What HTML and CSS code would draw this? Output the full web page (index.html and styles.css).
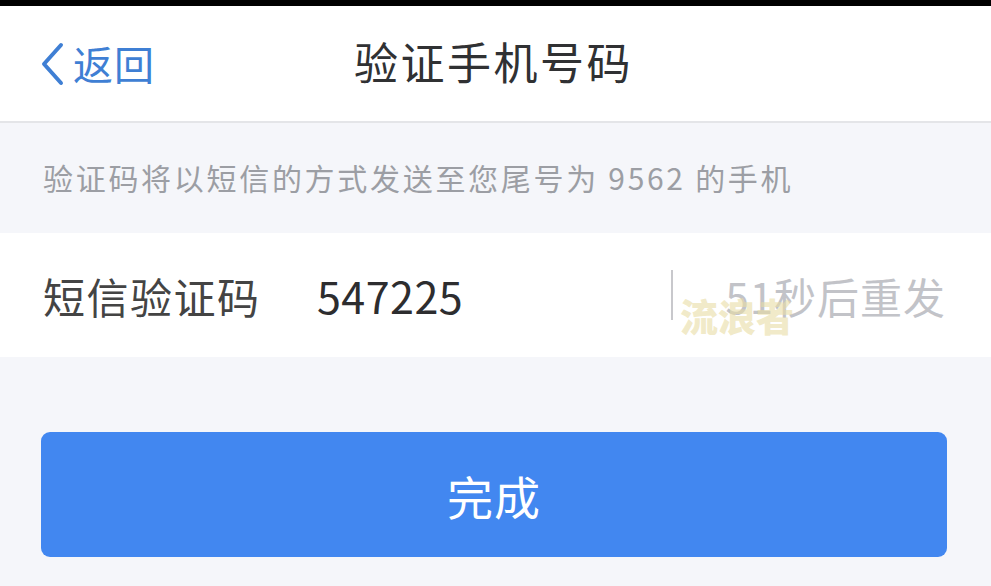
FILE: index.html
```html
<!DOCTYPE html>
<html lang="zh-CN">
<head>
<meta charset="utf-8">
<title>验证手机号码</title>
<link rel="stylesheet" href="styles.css">
</head>
<body>
<div class="status"></div>
<header class="nav">
  <a class="back">
    <svg class="chev" width="26" height="44" viewBox="0 0 26 44"><path d="M22 3 L5 22 L22 41" fill="none" stroke="#3f7fd4" stroke-width="4" stroke-linecap="round" stroke-linejoin="round"/></svg>
    <span>返回</span>
  </a>
  <h1 class="title">验证手机号码</h1>
  <div></div>
</header>
<div class="hint">验证码将以短信的方式发送至您尾号为 9562 的手机</div>
<div class="row">
  <span class="label">短信验证码</span>
  <span class="code">547225</span>
  <span class="divider"></span>
  <span class="resend">51秒后重发</span>
  <span class="watermark">流浪者</span>
</div>
<div class="actions">
  <button class="done">完成</button>
</div>
</body>
</html>
```
FILE: styles.css
```css
html, body {
  margin: 0;
  padding: 0;
  background: #f5f6fa;
  font-family: "Noto Sans CJK SC", "Noto Sans", sans-serif;
}
.status {
  height: 6px;
  background: #000;
}
.nav {
  height: 115px;
  background: #fff;
  border-bottom: 2px solid #e4e5e8;
  display: grid;
  grid-template-columns: 1fr auto 1fr;
  align-items: center;
}
.back {
  display: flex;
  align-items: center;
  padding-left: 39px;
  color: #3f7fd4;
  font-size: 40px;
  letter-spacing: 1px;
  gap: 8px;
}
.back span { margin-top: -2px; }
.title {
  margin: 0;
  font-size: 44px;
  font-weight: 400;
  letter-spacing: 2.5px;
  color: #303133;
  margin-top: -6px;
  margin-left: -4px;
}
.hint {
  height: 110px;
  box-sizing: border-box;
  padding-left: 43px;
  padding-bottom: 2px;
  display: flex;
  align-items: center;
  font-size: 30px;
  letter-spacing: 2.7px;
  color: #9c9ea4;
}
.row {
  position: relative;
  height: 124px;
  background: #fff;
  display: flex;
  align-items: center;
  padding-left: 43px;
}
.label {
  font-size: 42px;
  color: #444;
  letter-spacing: 1.5px;
  width: 274px;
}
.code {
  font-size: 43px;
  color: #2d2d2f;
  letter-spacing: 0.5px;
  flex: 1;
}
.divider {
  width: 2px;
  height: 50px;
  background: #c8c8cc;
  margin-right: 52px;
}
.resend {
  font-size: 42px;
  color: #c2c3c8;
  margin-right: 45px;
  letter-spacing: 1px;
}
.watermark {
  position: absolute;
  left: 680px;
  top: 58px;
  font-size: 38px;
  font-weight: 900;
  color: rgba(233, 221, 165, 0.62);
  line-height: 48px;
}
.actions {
  padding: 75px 44px 0 41px;
}
.done {
  display: block;
  width: 100%;
  height: 125px;
  border: 0;
  border-radius: 9px;
  background: #4287f0;
  color: #fff;
  font-family: "Noto Sans CJK SC", sans-serif;
  font-size: 46px;
  letter-spacing: 1px;
}
```
